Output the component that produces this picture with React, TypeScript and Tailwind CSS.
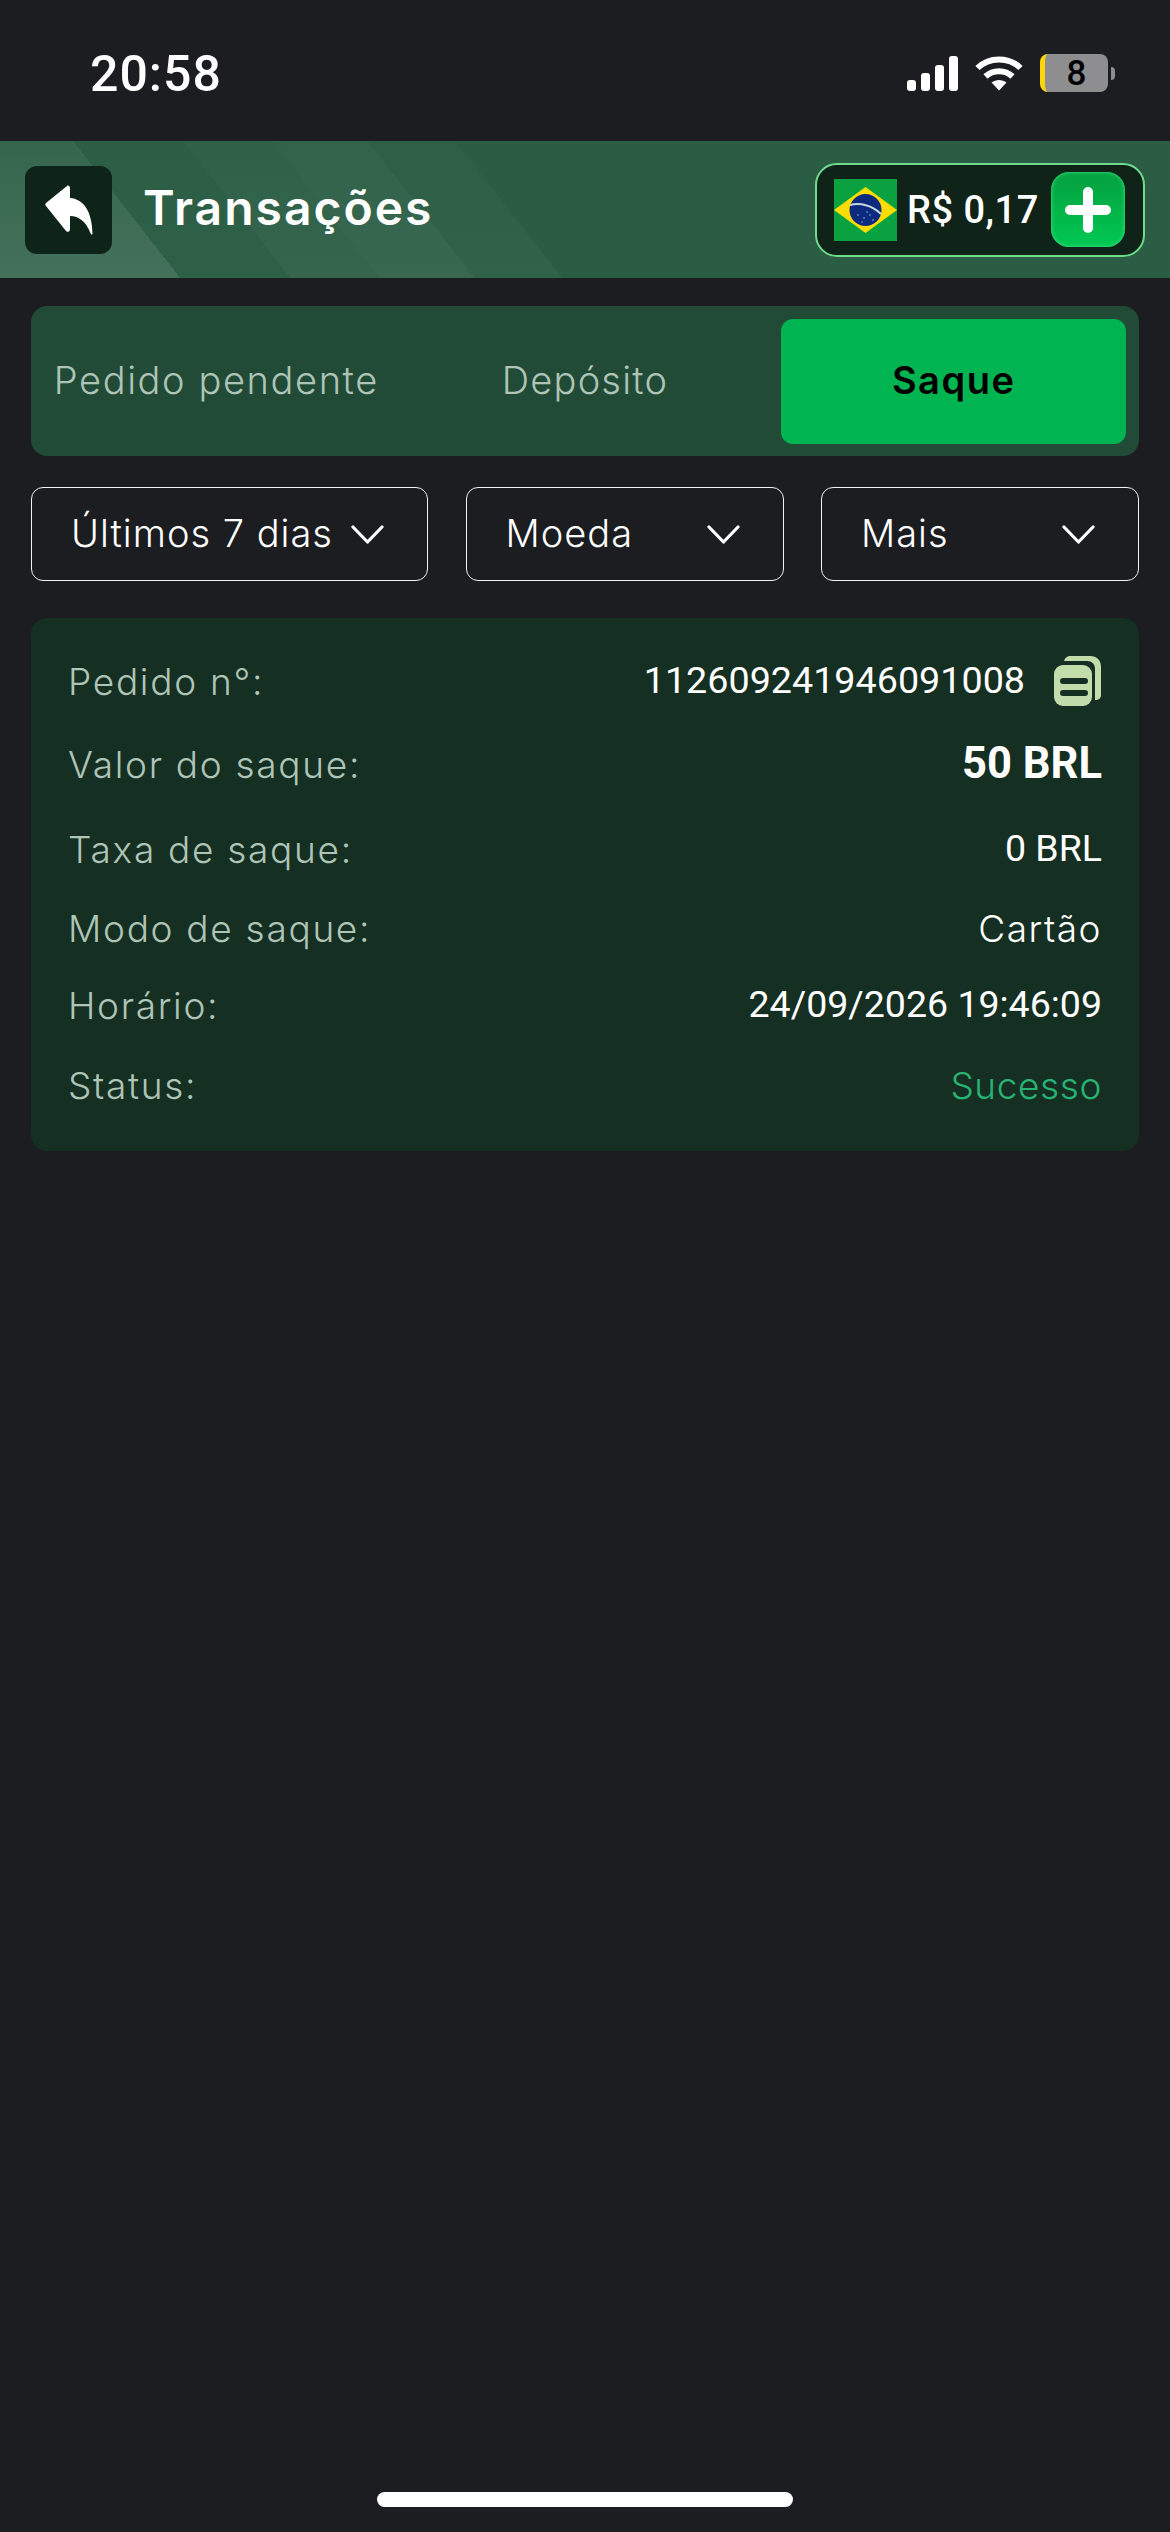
const sans = "font-['Inter','Noto_Sans',sans-serif]";
const num = "font-['Roboto','Liberation_Sans',sans-serif]";

function StatusBar() {
	return (
		<div className="flex h-[141px] items-start justify-between pt-[49px] pl-[90px] pr-[55px]">
			<span className={`${num} text-[50px] leading-[50px] font-medium tracking-[1px] text-white`}>20:58</span>
			<div className="flex items-center gap-[17px] pt-[5px]">
				<svg width="51" height="35" viewBox="0 0 51 35" fill="#fff">
					<rect x="0" y="24" width="9" height="11" rx="3" />
					<rect x="14" y="17" width="9" height="18" rx="3" />
					<rect x="28" y="9" width="9" height="26" rx="3" />
					<rect x="42" y="0" width="9" height="35" rx="3" />
				</svg>
				<svg width="48" height="36" viewBox="0 0 48 36" fill="none" stroke="#fff" strokeWidth="6">
					<path d="M2.5 13 C 14 1.5, 34 1.5, 45.5 13" />
					<path d="M10.5 21.5 C 18 14.5, 30 14.5, 37.5 21.5" />
					<path d="M24 35.5 L16.5 27.5 C 21 24, 27 24, 31.5 27.5 Z" fill="#fff" stroke="none" />
				</svg>
				<div className="flex items-center gap-[3px]">
					<div className="flex h-[38px] w-[68px] items-center justify-center overflow-hidden rounded-[8px] border-l-[5px] border-[#ffd60a] bg-[#8e8e90]">
						<span className={`${num} text-[35px] leading-none font-medium text-black`}>8</span>
					</div>
					<div className="h-[13px] w-[4px] rounded-r-full bg-[#8e8e90]" />
				</div>
			</div>
		</div>
	);
}

function Flag() {
	return (
		<svg width="63" height="62" viewBox="0 0 63 62" className="shrink-0">
			<rect width="63" height="62" fill="#0aa240" />
			<path d="M31.5 8 L63 31 L31.5 54 L0 31 Z" fill="#fedc00" />
			<circle cx="31.5" cy="31" r="16" fill="#0b2a80" />
			<path d="M16 26 C 26 23.5, 38 26, 47 35" fill="none" stroke="#c6d8dc" strokeWidth="2" />
			<g fill="#9fb4dc">
				<circle cx="24" cy="36" r="0.8" />
				<circle cx="30" cy="39" r="0.8" />
				<circle cx="36" cy="36" r="0.8" />
				<circle cx="39" cy="41" r="0.8" />
				<circle cx="28" cy="43" r="0.8" />
				<circle cx="33" cy="33" r="0.8" />
			</g>
		</svg>
	);
}

function Header() {
	return (
		<div className="flex h-[137px] items-center justify-between bg-[#2a5d44] bg-[linear-gradient(to_bottom,rgba(42,93,68,0.55),rgba(42,93,68,0)),linear-gradient(52deg,rgba(255,255,255,0.12)_0,rgba(255,255,255,0.12)_142px,rgba(255,255,255,0.02)_142px,rgba(255,255,255,0.02)_229px,rgba(255,255,255,0.05)_229px,rgba(255,255,255,0.05)_299px,rgba(255,255,255,0.07)_299px,rgba(255,255,255,0.07)_374px,rgba(255,255,255,0.03)_374px,rgba(255,255,255,0.03)_443px,rgba(255,255,255,0)_443px)] pl-[25px] pr-[25px]">
			<div className="flex items-center gap-[31px]">
				<div className="flex h-[88px] w-[87px] items-center justify-center rounded-[12px] bg-[#0f2418]">
					<svg width="48" height="50" viewBox="0 0 48 50" fill="#fff">
						<path d="M22 1 C 23 0, 25 1, 25 3 V 13 C 38 14, 47 25, 47.5 49 C 47 50, 46 50, 45 47 C 41 37, 34 31, 25 31 V 44 C 25 47, 22 47.5, 21 46 L 1 21 C 0 20, 0 19, 1 18 Z" />
					</svg>
				</div>
				<span className={`${sans} pb-[3px] text-[48px] leading-none font-semibold tracking-[2px] text-white`}>Transações</span>
			</div>
			<div className="flex h-[94px] w-[330px] items-center rounded-[22px] border-2 border-[#6fdc8c] bg-[#0f2318] pl-[17px] pr-[18px]">
				<Flag />
				<span className={`${num} ml-[10px] text-[38px] leading-none font-medium tracking-[0.5px] text-white`}>R$ 0,17</span>
				<div className="ml-auto flex h-[75px] w-[74px] items-center justify-center rounded-[18px] bg-gradient-to-b from-[#05a03f] to-[#00c853] shadow-[inset_0_0_4px_#3fe884]">
					<svg width="52" height="52" viewBox="0 0 52 52" stroke="#fff" strokeWidth="10" strokeLinecap="round">
						<path d="M26 8 V44 M8 26 H44" />
					</svg>
				</div>
			</div>
		</div>
	);
}

function Tabs() {
	return (
		<div className="mt-[28px] grid h-[150px] grid-cols-3 items-center gap-[24px] rounded-[16px] bg-[#214b36] px-[13px]">
			<div className={`${sans} whitespace-nowrap pb-[2px] text-center text-[38px] leading-none font-light tracking-[1.6px] text-[#aec4b7]`}>Pedido pendente</div>
			<div className={`${sans} pb-[2px] text-center text-[38px] leading-none font-light tracking-[1.2px] text-[#aec4b7]`}>Depósito</div>
			<div className={`${sans} flex h-[125px] items-center justify-center rounded-[12px] bg-[#00b451] pb-[2px] text-[38px] leading-none font-semibold tracking-[1.5px] text-black`}>Saque</div>
		</div>
	);
}

function Filter({ label, className }: { label: string; className: string }) {
	return (
		<div className={`flex h-[94px] items-center justify-between rounded-[12px] border border-[#f2f2f2] pl-[39px] pr-[43px] ${className}`}>
			<span className={`${sans} whitespace-nowrap pb-[2px] text-[38px] leading-none font-light tracking-[1px] text-white`}>{label}</span>
			<svg width="33" height="19" viewBox="0 0 33 19" fill="none" stroke="#fff" strokeWidth="3.2" strokeLinecap="round" strokeLinejoin="round" className="shrink-0">
				<path d="M2 2 L16.5 17 L31 2" />
			</svg>
		</div>
	);
}

function CopyIcon() {
	return (
		<svg width="48" height="50" viewBox="0 0 48 50" className="ml-[29px] shrink-0">
			<path d="M10 5 C 11 2, 13 0, 17 0 H 36 C 43 0, 47 4, 47 11 V 39 C 47 42, 45 44, 41 44 V 13 C 41 8, 38 5, 33 5 Z" fill="#c3dcab" />
			<rect x="0" y="9" width="38" height="41" rx="9" fill="#c3dcab" />
			<path d="M9 25 H 31 M9 37 H 31" stroke="#152f22" strokeWidth="6" strokeLinecap="round" />
		</svg>
	);
}

function Row({ label, className, children }: { label: string; className: string; children: React.ReactNode }) {
	return (
		<div className={`flex h-[50px] items-center justify-between ${className}`}>
			<span className={`${sans} text-[37px] leading-none font-light tracking-[1.7px] text-[#aec4b7]`}>{label}</span>
			<div className="flex items-center">{children}</div>
		</div>
	);
}

export default function App() {
	return (
		<div className="flex h-[2532px] flex-col overflow-hidden bg-[#1c1d21]">
			<StatusBar />
			<Header />
			<div className="px-[31px]">
				<Tabs />
				<div className="mt-[31px] flex justify-between">
					<Filter label="Últimos 7 dias" className="w-[397px]" />
					<Filter label="Moeda" className="w-[318px]" />
					<Filter label="Mais" className="w-[318px]" />
				</div>
				<div className="mt-[37px] rounded-[16px] bg-[#152f22] pt-[38px] pb-[41px] pl-[37px] pr-[37px]">
					<Row label="Pedido n°:" className="">
						<span className={`${num} text-[37.7px] leading-none text-white`}>112609241946091008</span>
						<CopyIcon />
					</Row>
					<Row label="Valor do saque:" className="mt-[33px]">
						<span className={`${num} text-[43.5px] leading-none font-bold text-white`}>50 BRL</span>
					</Row>
					<Row label="Taxa de saque:" className="mt-[35px]">
						<span className={`${num} text-[37.5px] leading-none text-white`}>0 BRL</span>
					</Row>
					<Row label="Modo de saque:" className="mt-[29px]">
						<span className={`${sans} text-[37px] leading-none font-light tracking-[1.5px] text-white`}>Cartão</span>
					</Row>
					<Row label="Horário:" className="mt-[27px]">
						<span className={`${num} text-[37.5px] leading-none text-white`}>24/09/2026 19:46:09</span>
					</Row>
					<Row label="Status:" className="mt-[30px]">
						<span className={`${sans} text-[37px] leading-none font-light tracking-[0.6px] text-[#27b374]`}>Sucesso</span>
					</Row>
				</div>
			</div>
			<div className="mt-auto flex justify-center pb-[25px]">
				<div className="h-[15px] w-[416px] rounded-full bg-white" />
			</div>
		</div>
	);
}
